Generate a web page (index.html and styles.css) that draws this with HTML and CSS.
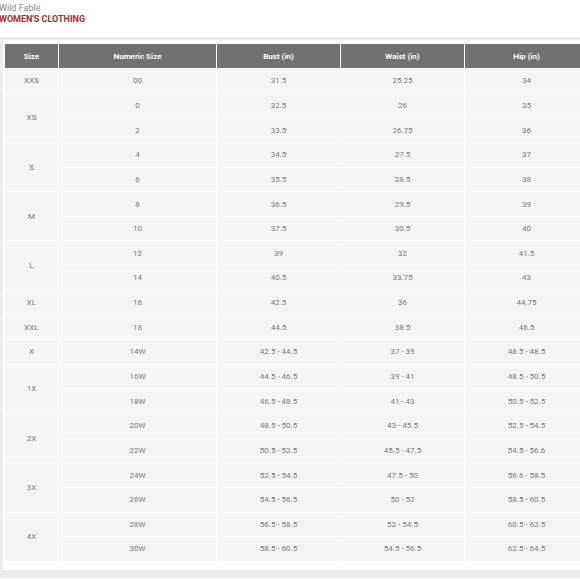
FILE: index.html
```html
<!DOCTYPE html>
<html>
<head>
<meta charset="utf-8">
<link rel="stylesheet" href="styles.css">
</head>
<body>
<div class="page">
  <div class="brand">
    <div class="brand-name">Wild Fable</div>
    <div class="brand-title">WOMEN'S CLOTHING</div>
  </div>
  <div class="band">
    <div class="card">
      <table class="chart">
        <colgroup>
          <col class="c-size"><col class="c-num"><col class="c-m"><col class="c-m"><col class="c-m">
        </colgroup>
        <thead>
          <tr><th>Size</th><th>Numeric Size</th><th>Bust (in)</th><th>Waist (in)</th><th>Hip (in)</th></tr>
        </thead>
        <tbody>
          <tr><td>XXS</td><td>00</td><td>31.5</td><td>25.25</td><td>34</td></tr>
          <tr><td rowspan="2">XS</td><td>0</td><td>32.5</td><td>26</td><td>35</td></tr>
          <tr><td>2</td><td>33.5</td><td>26.75</td><td>36</td></tr>
          <tr><td rowspan="2">S</td><td>4</td><td>34.5</td><td>27.5</td><td>37</td></tr>
          <tr><td>6</td><td>35.5</td><td>28.5</td><td>38</td></tr>
          <tr><td rowspan="2">M</td><td>8</td><td>36.5</td><td>29.5</td><td>39</td></tr>
          <tr><td>10</td><td>37.5</td><td>30.5</td><td>40</td></tr>
          <tr><td rowspan="2">L</td><td>12</td><td>39</td><td>32</td><td>41.5</td></tr>
          <tr><td>14</td><td>40.5</td><td>33.75</td><td>43</td></tr>
          <tr><td>XL</td><td>16</td><td>42.5</td><td>36</td><td>44.75</td></tr>
          <tr><td>XXL</td><td>18</td><td>44.5</td><td>38.5</td><td>46.5</td></tr>
          <tr><td>X</td><td>14W</td><td>42.5 - 44.5</td><td>37 - 39</td><td>46.5 - 48.5</td></tr>
          <tr><td rowspan="2">1X</td><td>16W</td><td>44.5 - 46.5</td><td>39 - 41</td><td>48.5 - 50.5</td></tr>
          <tr><td>18W</td><td>46.5 - 48.5</td><td>41 - 43</td><td>50.5 - 52.5</td></tr>
          <tr><td rowspan="2">2X</td><td>20W</td><td>48.5 - 50.5</td><td>43 - 45.5</td><td>52.5 - 54.5</td></tr>
          <tr><td>22W</td><td>50.5 - 52.5</td><td>45.5 - 47.5</td><td>54.5 - 56.6</td></tr>
          <tr><td rowspan="2">3X</td><td>24W</td><td>52.5 - 54.5</td><td>47.5 - 50</td><td>56.6 - 58.5</td></tr>
          <tr><td>26W</td><td>54.5 - 56.5</td><td>50 - 52</td><td>58.5 - 60.5</td></tr>
          <tr><td rowspan="2">4X</td><td>28W</td><td>56.5 - 58.5</td><td>52 - 54.5</td><td>60.5 - 62.5</td></tr>
          <tr><td>30W</td><td>58.5 - 60.5</td><td>54.5 - 56.5</td><td>62.5 - 64.5</td></tr>
        </tbody>
      </table>
    </div>
  </div>
</div>
</body>
</html>
```
FILE: styles.css
```css
html, body {
  margin: 0;
  padding: 0;
  background: #ffffff;
}
.page {
  width: 580px;
  height: 579px;
  overflow: hidden;
  font-family: Roboto, "Liberation Sans", sans-serif;
}
.brand {
  height: 37px;
  padding: 3px 0 0 0;
  box-sizing: border-box;
  margin-left: -1px;
}
.brand-name {
  font-size: 9px;
  line-height: 11px;
  color: #8a8a8a;
}
.brand-title {
  font-size: 9px;
  line-height: 11px;
  font-weight: 700;
  color: #a32a2e;
}
.band {
  background: #ededed;
  padding: 3px 0 8px 3px;
}
.card {
  background: #ffffff;
  padding: 3px 0 8px 1px;
  overflow: hidden;
}
.chart {
  table-layout: fixed;
  border-collapse: separate;
  border-spacing: 1px;
  width: 584px;
  font-size: 8px;
}
.c-size { width: 53px; }
.c-num { width: 157px; }
.c-m { width: 123px; }
.chart th {
  background: #717171;
  color: #ffffff;
  font-weight: 700;
  height: 24px;
  padding: 0;
  text-align: center;
}
.chart td {
  background: #f5f5f5;
  color: #7a7a7a;
  height: 23.65px;
  padding: 0;
  text-align: center;
}
```
